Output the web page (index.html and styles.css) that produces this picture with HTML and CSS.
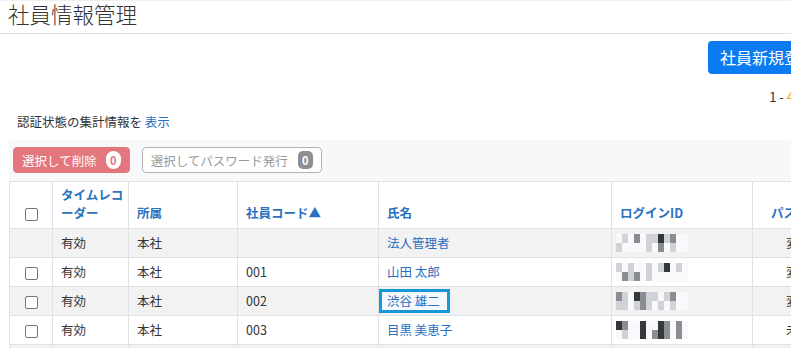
FILE: index.html
```html
<!DOCTYPE html>
<html lang="ja">
<head>
    <meta charset="UTF-8">
    <meta name="viewport" content="width=device-width, initial-scale=1.0">
    <title>社員情報管理</title>
    <link rel="stylesheet" href="styles.css">
</head>
<body>

    <div class="page-header">
        <h1>社員情報管理</h1>
    </div>

    <div class="content">
        <div class="actions">
            <button class="btn-primary">社員新規登録</button>
        </div>

        <p class="count">1 - <span class="num">4</span> / <span class="num">4</span> 件</p>

        <p class="summary">認証状態の集計情報を <a href="#">表示</a></p>

        <div class="bulk-bar">
            <button class="btn-danger" disabled>選択して削除<span class="badge badge-light">0</span></button>
            <button class="btn-outline" disabled>選択してパスワード発行<span class="badge badge-gray">0</span></button>
        </div>

        <table class="staff-table">
            <colgroup>
                <col class="c-check">
                <col class="c-rec">
                <col class="c-dept">
                <col class="c-code">
                <col class="c-name">
                <col class="c-login">
                <col class="c-pass">
            </colgroup>
            <thead>
                <tr>
                    <th class="check"><input type="checkbox"></th>
                    <th>タイムレコーダー</th>
                    <th>所属</th>
                    <th>社員コード▲</th>
                    <th>氏名</th>
                    <th>ログインID</th>
                    <th class="pass">パスワード状態</th>
                </tr>
            </thead>
            <tbody>
                <tr>
                    <td class="check"></td>
                    <td>有効</td>
                    <td>本社</td>
                    <td></td>
                    <td><a href="#">法人管理者</a></td>
                    <td><div class="mosaic">
                        <i></i><i class="a"></i><i></i><i class="b"></i><i></i><i class="a"></i><i class="a"></i><i class="c"></i><i class="a"></i><i class="b"></i><i></i><i></i>
                        <i class="a"></i><i></i><i></i><i></i><i></i><i class="a"></i><i></i><i class="b"></i><i></i><i class="a"></i><i></i><i></i>
                    </div></td>
                    <td class="pass">変更済み</td>
                </tr>
                <tr>
                    <td class="check"><input type="checkbox"></td>
                    <td>有効</td>
                    <td>本社</td>
                    <td>001</td>
                    <td><a href="#">山田 太郎</a></td>
                    <td><div class="mosaic">
                        <i class="a"></i><i></i><i class="a"></i><i></i><i></i><i class="a"></i><i></i><i class="a"></i><i class="c"></i><i></i><i class="a"></i><i></i>
                        <i></i><i class="b"></i><i class="a"></i><i class="b"></i><i></i><i class="a"></i><i></i><i></i><i></i><i></i><i></i><i></i>
                    </div></td>
                    <td class="pass">変更済み</td>
                </tr>
                <tr>
                    <td class="check"><input type="checkbox"></td>
                    <td>有効</td>
                    <td>本社</td>
                    <td>002</td>
                    <td><a href="#" class="focused">渋谷 雄二</a></td>
                    <td><div class="mosaic">
                        <i class="b"></i><i class="a"></i><i></i><i class="c"></i><i class="b"></i><i class="a"></i><i class="a"></i><i></i><i class="a"></i><i class="b"></i><i></i><i></i>
                        <i class="a"></i><i class="a"></i><i></i><i class="a"></i><i class="b"></i><i class="a"></i><i></i><i class="a"></i><i></i><i class="a"></i><i></i><i></i>
                    </div></td>
                    <td class="pass">変更済み</td>
                </tr>
                <tr>
                    <td class="check"><input type="checkbox"></td>
                    <td>有効</td>
                    <td>本社</td>
                    <td>003</td>
                    <td><a href="#">目黒 美恵子</a></td>
                    <td><div class="mosaic">
                        <i class="c"></i><i class="b"></i><i></i><i></i><i class="c"></i><i></i><i></i><i class="c"></i><i class="b"></i><i></i><i class="b"></i><i></i>
                        <i></i><i class="a"></i><i></i><i></i><i class="c"></i><i></i><i class="b"></i><i class="c"></i><i class="b"></i><i></i><i class="b"></i><i></i>
                    </div></td>
                    <td class="pass">未変更</td>
                </tr>
                <tr>
                    <td class="check"><input type="checkbox"></td>
                    <td>有効</td>
                    <td>本社</td>
                    <td>004</td>
                    <td><a href="#">佐藤 花子</a></td>
                    <td></td>
                    <td class="pass">未変更</td>
                </tr>
            </tbody>
        </table>
    </div>

</body>
</html>
```

FILE: styles.css
```css
body {
    margin: 0;
    overflow: hidden;
    font-family: "Noto Sans CJK JP", "Noto Sans", sans-serif;
    font-size: 12.5px;
    color: #333;
    background-color: #fff;
}
.page-header {
    height: 34px;
    border-top: 1px solid #f0f0f0;
    border-bottom: 1px solid #dee2e6;
    box-sizing: border-box;
}
.page-header h1 {
    margin: 0;
    padding-left: 8px;
    font-size: 21.5px;
    font-weight: 300;
    line-height: 26px;
    color: #333;
}
.content {
    width: 819px;
    padding-left: 9px;
}
.actions {
    display: flex;
    justify-content: flex-end;
    margin-top: 7px;
}
.btn-primary {
    height: 33px;
    padding: 0 12px;
    border: none;
    border-radius: 4px;
    background-color: #0b7bf1;
    color: #fff;
    font-family: inherit;
    font-size: 16px;
    line-height: 33px;
}
.count {
    margin: 15px 0 0;
    text-align: right;
    line-height: 16px;
    font-size: 13px;
}
.count .num {
    color: #e8a23a;
}
.summary {
    margin: 9px 0 0;
    padding-left: 8px;
    line-height: 16px;
}
.summary a {
    color: #2a72c0;
    text-decoration: none;
}
.bulk-bar {
    margin-top: 10px;
    height: 41px;
    padding: 7px 4px 0;
    box-sizing: border-box;
    background-color: #f7f8f9;
    display: flex;
    gap: 12px;
    width: 782px;
}
.bulk-bar button {
    height: 26px;
    padding: 0 8px;
    border-radius: 4px;
    font-family: inherit;
    font-size: 12.5px;
    display: flex;
    align-items: center;
}
.btn-danger {
    background-color: #e4767e;
    border: 1px solid #e4767e;
    color: #fff;
}
.btn-outline {
    background-color: #fff;
    border: 1px solid #b4b4b4;
    color: #999;
}
.badge {
    margin-left: 9px;
    height: 18px;
    min-width: 15px;
    font-size: 11px;
    font-weight: bold;
    line-height: 18px;
    text-align: center;
    box-sizing: border-box;
}
.badge-light {
    background-color: #fff;
    color: #e4767e;
    border-radius: 8px;
}
.badge-gray {
    background-color: #8f8f8f;
    color: #fff;
    border-radius: 5px;
    margin-left: 10px;
}
.staff-table {
    border-collapse: collapse;
    table-layout: fixed;
    width: 872px;
}
.c-check { width: 43px; }
.c-rec { width: 76px; }
.c-dept { width: 109px; }
.c-code { width: 141px; }
.c-name { width: 233px; }
.c-login { width: 141px; }
.c-pass { width: 129px; }
.staff-table th, .staff-table td {
    border: 1px solid #dee2e6;
    text-align: left;
    padding: 5px 7px 5px 8px;
    line-height: 18px;
    white-space: nowrap;
    overflow: hidden;
}
.staff-table th {
    vertical-align: bottom;
    padding: 4px 3px 6px 8px;
    color: #2a72bd;
    font-weight: bold;
    white-space: normal;
    line-height: 18px;
    height: 35px;
}
.staff-table tbody tr:nth-child(odd) {
    background-color: #f2f2f2;
}
.staff-table .check {
    text-align: center;
    padding-left: 0;
    padding-right: 0;
}
.staff-table th.pass {
    padding-left: 18px;
}
.staff-table td.pass {
    padding-left: 33px;
}
.staff-table td a {
    color: #2a6fbe;
    text-decoration: none;
}
.staff-table td a.focused {
    display: inline-block;
    margin-left: -5px;
    padding: 0 7px 0 5px;
    background-color: #f5f8fc;
    outline: 3px solid #1697d7;
}
input[type="checkbox"] {
    appearance: none;
    margin: 0;
    width: 13px;
    height: 13px;
    border: 1px solid #767676;
    border-radius: 2px;
    background-color: #fff;
    vertical-align: middle;
}
.mosaic {
    margin-left: -4px;
    width: 72px;
    height: 18px;
    display: grid;
    grid-template-columns: repeat(12, 6px);
    grid-template-rows: repeat(2, 9px);
    background-color: #f9f9fb;
}
.mosaic i.a { background-color: #cfd3d8; }
.mosaic i.b { background-color: #8a8d92; }
.mosaic i.c { background-color: #34373c; }
```
